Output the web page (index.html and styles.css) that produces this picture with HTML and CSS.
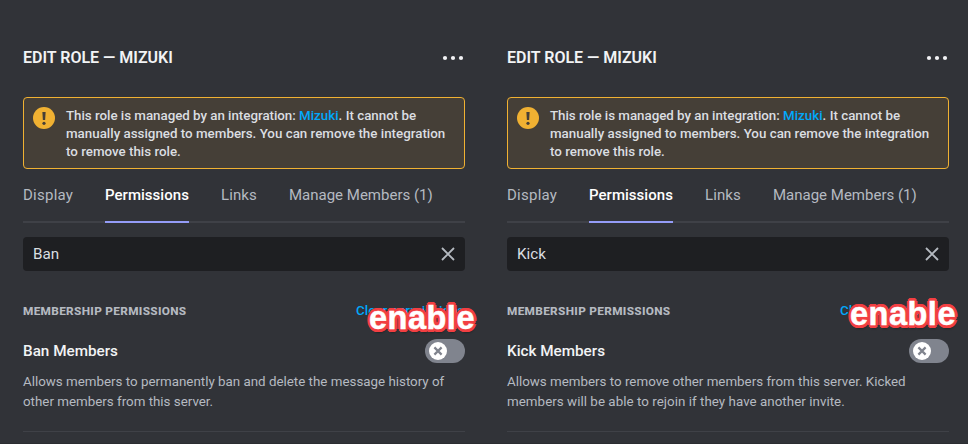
FILE: index.html
```
<!DOCTYPE html>
<html lang="en">
<head>
<meta charset="utf-8">
<title>Edit Role</title>
<link rel="stylesheet" href="styles.css">
</head>
<body>
<main class="board">
  <section class="panel">
    <header class="head">
      <h1 class="title">EDIT ROLE — MIZUKI</h1>
      <svg class="more" viewBox="0 0 24 24"><circle cx="4" cy="12" r="2.1"/><circle cx="12" cy="12" r="2.1"/><circle cx="20" cy="12" r="2.1"/></svg>
    </header>
    <div class="alert">
      <svg class="warn" viewBox="0 0 22 22"><circle cx="11" cy="11" r="11" fill="#f0b132"/><path d="M9.4 5h3.2l-.5 8H9.9z" fill="#453f37"/><circle cx="11" cy="16.3" r="1.6" fill="#453f37"/></svg>
      <p class="alert-text"><span class="intro">This role is managed by an integration: </span><a class="link">Mizuki</a>. It cannot be<br>manually assigned to members. You can remove the integration<br>to remove this role.</p>
    </div>
    <nav class="tabs">
      <span class="tab tab-display">Display</span>
      <span class="tab tab-permissions active">Permissions</span>
      <span class="tab tab-links">Links</span>
      <span class="tab tab-members">Manage Members (1)</span>
    </nav>
    <div class="search">
      <span>Ban</span>
      <svg class="clear" viewBox="0 0 14 14"><path d="M1 1l12 12M13 1L1 13"/></svg>
    </div>
    <div class="group">
      <h2 class="label">MEMBERSHIP PERMISSIONS</h2>
      <div class="reset">
        <a class="link">Clear permissions</a>
        <strong class="note note-ban">enable</strong>
      </div>
    </div>
    <div class="setting">
      <h3 class="name">Ban Members</h3>
      <span class="switch"><svg class="knob" viewBox="0 0 18 18"><circle cx="9" cy="9" r="9" fill="#fff"/><path d="M5.4 5.4l7.2 7.2M12.6 5.4l-7.2 7.2" stroke="#80848e" stroke-width="2.2"/></svg></span>
    </div>
    <p class="desc">Allows members to permanently ban and delete the message history of<br>other members from this server.</p>
  </section>

  <section class="panel">
    <header class="head">
      <h1 class="title">EDIT ROLE — MIZUKI</h1>
      <svg class="more" viewBox="0 0 24 24"><circle cx="4" cy="12" r="2.1"/><circle cx="12" cy="12" r="2.1"/><circle cx="20" cy="12" r="2.1"/></svg>
    </header>
    <div class="alert">
      <svg class="warn" viewBox="0 0 22 22"><circle cx="11" cy="11" r="11" fill="#f0b132"/><path d="M9.4 5h3.2l-.5 8H9.9z" fill="#453f37"/><circle cx="11" cy="16.3" r="1.6" fill="#453f37"/></svg>
      <p class="alert-text"><span class="intro">This role is managed by an integration: </span><a class="link">Mizuki</a>. It cannot be<br>manually assigned to members. You can remove the integration<br>to remove this role.</p>
    </div>
    <nav class="tabs">
      <span class="tab tab-display">Display</span>
      <span class="tab tab-permissions active">Permissions</span>
      <span class="tab tab-links">Links</span>
      <span class="tab tab-members">Manage Members (1)</span>
    </nav>
    <div class="search">
      <span>Kick</span>
      <svg class="clear" viewBox="0 0 14 14"><path d="M1 1l12 12M13 1L1 13"/></svg>
    </div>
    <div class="group">
      <h2 class="label">MEMBERSHIP PERMISSIONS</h2>
      <div class="reset">
        <a class="link">Clear permissions</a>
        <strong class="note note-kick">enable</strong>
      </div>
    </div>
    <div class="setting">
      <h3 class="name">Kick Members</h3>
      <span class="switch"><svg class="knob" viewBox="0 0 18 18"><circle cx="9" cy="9" r="9" fill="#fff"/><path d="M5.4 5.4l7.2 7.2M12.6 5.4l-7.2 7.2" stroke="#80848e" stroke-width="2.2"/></svg></span>
    </div>
    <p class="desc">Allows members to remove other members from this server. Kicked<br><span class="wide">members will be able to rejoin if they have another invite.</span></p>
  </section>
</main>
</body>
</html>
```
FILE: styles.css
```
* { box-sizing: border-box; margin: 0; padding: 0; }

body {
  width: 968px;
  height: 444px;
  overflow: hidden;
  background: #313338;
  font-family: Roboto, "Noto Sans", sans-serif;
  white-space: nowrap;
}

.board {
  display: grid;
  grid-template-columns: 442px 442px;
  column-gap: 42px;
  height: 444px;
  padding: 48px 0 0 23px;
  border-bottom: 1px solid #2b2d31;
}

.panel { display: flex; flex-direction: column; }

.head { display: flex; align-items: center; justify-content: space-between; height: 20px; }
.title { font-size: 16px; font-weight: 600; line-height: 20px; color: #f2f3f5; }
.more { width: 24px; height: 24px; fill: #f2f3f5; }

.alert {
  display: flex;
  gap: 11px;
  height: 72px;
  margin-top: 29px;
  padding: 9px 9px 8px;
  border: 1px solid #f0b132;
  border-radius: 4px;
  background: #453f37;
}
.warn { flex: none; width: 22px; height: 22px; }
.alert-text { font-size: 13.35px; font-weight: 500; line-height: 18px; color: #dbdee1; }
.intro { letter-spacing: -.03px; }
.link { color: #00a8fc; }

.tabs {
  display: flex;
  gap: 32px;
  height: 40px;
  margin-top: 14px;
  border-bottom: 2px solid #3f4147;
}
.tab { height: 40px; font-size: 15px; line-height: 24px; color: #b5bac1; }
.tab-display { width: 50px; letter-spacing: .25px; }
.tab-permissions { width: 84px; letter-spacing: .03px; }
.tab-links { width: 36px; letter-spacing: .1px; }
.active { font-weight: 500; color: #fff; border-bottom: 2px solid #949cf7; }

.search {
  display: flex;
  align-items: center;
  justify-content: space-between;
  height: 34px;
  margin-top: 14px;
  padding: 0 10px;
  border-radius: 4px;
  background: #1e1f22;
  font-size: 15.2px;
  color: #dbdee1;
}
.clear { width: 14px; height: 14px; fill: none; stroke: #b5bac1; stroke-width: 1.8; }

.group { display: flex; align-items: center; justify-content: space-between; height: 20px; margin-top: 30px; }
.label { font-size: 11.8px; font-weight: 800; letter-spacing: .32px; color: #b5bac1; }
.reset { position: relative; width: 109px; font-size: 13.4px; font-weight: 500; line-height: 20px; }

.note {
  position: absolute;
  font: 700 32.5px/36px "Liberation Sans", sans-serif;
  letter-spacing: .5px;
  color: #fff;
  -webkit-text-stroke: .5px #fff;
  text-shadow:
    3px 0 0 #f23f42, -3px 0 0 #f23f42, 0 3px 0 #f23f42, 0 -3px 0 #f23f42,
    2px 2px 0 #f23f42, -2px 2px 0 #f23f42, 2px -2px 0 #f23f42, -2px -2px 0 #f23f42,
    1px 3px 0 #f23f42, -1px 3px 0 #f23f42, 1px -3px 0 #f23f42, -1px -3px 0 #f23f42,
    1px 4px 2px rgba(0, 0, 0, .3);
}
.note-ban { left: 13px; top: -1px; }
.note-kick { left: 10px; top: -5px; }

.setting { display: flex; align-items: center; justify-content: space-between; height: 24px; margin-top: 18px; }
.name { font-size: 15.25px; font-weight: 500; line-height: 24px; color: #f2f3f5; }
.switch { display: flex; align-items: center; width: 40px; height: 24px; padding-left: 4px; border-radius: 12px; background: #80848e; }
.knob { width: 18px; height: 18px; }

.desc {
  height: 60px;
  margin-top: 9px;
  border-bottom: 1px solid #3f4147;
  font-size: 13.35px;
  line-height: 20px;
  color: #b5bac1;
}
.wide { letter-spacing: .04px; }
```
